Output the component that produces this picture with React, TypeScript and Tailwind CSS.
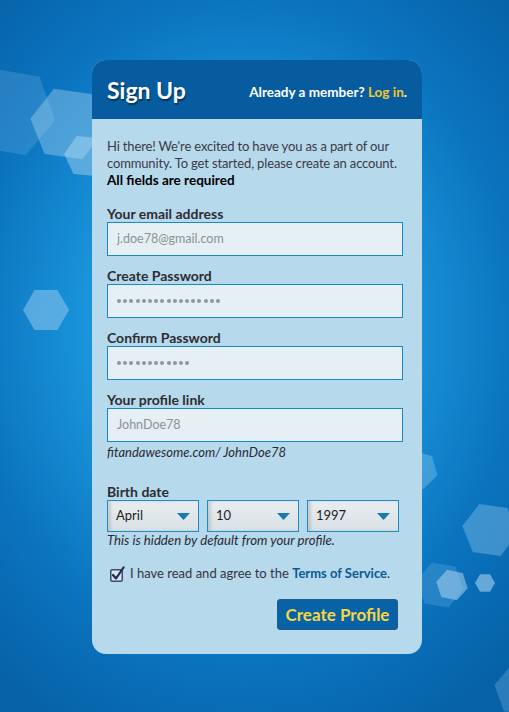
import React from "react";

function Hex({ cx, cy, r, fill, opacity, rot = 0 }: { cx: number; cy: number; r: number; fill: string; opacity: number; rot?: number }) {
  const pts: string[] = [];
  for (let i = 0; i < 6; i++) {
    const a = ((60 * i + rot) * Math.PI) / 180;
    pts.push(`${(cx + r * Math.cos(a)).toFixed(1)},${(cy + r * Math.sin(a)).toFixed(1)}`);
  }
  return <polygon points={pts.join(" ")} fill={fill} opacity={opacity} />;
}

function Background() {
  return (
    <svg className="absolute inset-0" width={509} height={712} viewBox="0 0 509 712">
      <Hex cx={10} cy={112} r={46} fill="#8cc6ec" opacity={0.22} rot={10} />
      <Hex cx={68} cy={124} r={38} fill="#a9d6f3" opacity={0.4} rot={8} />
      <Hex cx={86} cy={156} r={22} fill="#c4e3f7" opacity={0.4} rot={5} />
      <Hex cx={46} cy={310} r={23} fill="#8ec9ef" opacity={0.55} rot={0} />
      <Hex cx={418} cy={470} r={20} fill="#9cd0f0" opacity={0.35} rot={15} />
      <Hex cx={440} cy={585} r={24} fill="#7bbbe6" opacity={0.25} rot={10} />
      <Hex cx={490} cy={530} r={28} fill="#8cc6ec" opacity={0.4} rot={8} />
      <Hex cx={452} cy={585} r={16} fill="#b3daf4" opacity={0.5} rot={12} />
      <Hex cx={485} cy={583} r={10} fill="#a4d2f1" opacity={0.6} rot={0} />
      <Hex cx={522} cy={690} r={28} fill="#7fbde8" opacity={0.3} rot={10} />
    </svg>
  );
}

function Label({ children }: { children: React.ReactNode }) {
  return <div className="text-[14px] font-bold leading-[17px] text-[#2d2d33]">{children}</div>;
}

function Dots({ n }: { n: number }) {
  return (
    <div className="flex gap-[2.2px]">
      {Array.from({ length: n }).map((_, i) => (
        <span key={i} className="w-[4px] h-[4px] rounded-full bg-[#92969a]" />
      ))}
    </div>
  );
}

function Field({ label, value, dots }: { label: string; value?: string; dots?: number }) {
  return (
    <div className="flex flex-col">
      <Label>{label}</Label>
      <div className="h-[34px] border border-[#1589cb] bg-[#e6eff3] flex items-center pl-[9px]">
        {dots ? <Dots n={dots} /> : <span className="text-[12.5px] text-[#8d9196]">{value}</span>}
      </div>
    </div>
  );
}

function Select({ value }: { value: string }) {
  return (
    <div className="w-[92px] h-[32px] border border-[#1b8ccc] bg-[linear-gradient(to_bottom,#e9edef,#d9e1e5)] shadow-[inset_3px_0_3px_rgba(0,0,0,0.12)] flex items-center justify-between pl-[8px] pr-[8px]">
      <span className="text-[13px] text-[#1e1e22]">{value}</span>
      <svg width="13" height="7" viewBox="0 0 13 7">
        <polygon points="0,0 13,0 6.5,7" fill="#1a78b3" />
      </svg>
    </div>
  );
}

export default function App() {
  return (
    <div
      className="relative w-[509px] h-[712px] overflow-hidden bg-[radial-gradient(ellipse_75%_65%_at_48%_46%,#2fb0ec_0%,#1d9be0_35%,#0b75c0_70%,#0661a6_100%)]"
      style={{ fontFamily: "Lato, 'Noto Sans', sans-serif" }}
    >
      <Background />
      <div className="relative flex pl-[92px] pt-[60px]">
        <div className="w-[330px] rounded-[14px] overflow-hidden bg-[#b6d9ec] flex flex-col">
          <div className="h-[59px] bg-[#065c9e] flex items-center justify-between pl-[15px] pr-[15px]">
            <span className="text-[23px] font-bold text-white [text-shadow:1px_2px_1px_rgba(0,20,50,0.55)] leading-none mt-[1px]">Sign Up</span>
            <span className="text-[13.5px] font-bold text-white mt-[6px]">
              Already a member? <span className="text-[#f3c630]">Log in</span>.
            </span>
          </div>
          <div className="flex flex-col pl-[15px] pr-[15px] pt-[19px] pb-[24px]">
            <div className="text-[13px] tracking-[-0.15px] leading-[17px] text-[#3b3947]">
              Hi there! We're excited to have you as a part of our community. To get started, please create an account.
            </div>
            <div className="text-[13.5px] leading-[17px] font-bold text-black">All fields are required</div>
            <div className="flex flex-col gap-[11px] mt-[16px] pr-[4px]">
              <Field label="Your email address" value="j.doe78@gmail.com" />
              <Field label="Create Password" dots={17} />
              <Field label="Confirm Password" dots={12} />
              <Field label="Your profile link" value="JohnDoe78" />
            </div>
            <div className="mt-[2px] text-[13px] leading-[17px] italic text-[#2a2a33]">fitandawesome.com/ JohnDoe78</div>
            <div className="mt-[22px]">
              <Label>Birth date</Label>
              <div className="flex gap-[8px]">
                <Select value="April" />
                <Select value="10" />
                <Select value="1997" />
              </div>
              <div className="text-[13.2px] leading-[17px] italic text-[#2a2a33]">This is hidden by default from your profile.</div>
            </div>
            <div className="mt-[16px] flex items-center pl-[3px] h-[18px]">
              <svg width="15" height="16" viewBox="0 0 15 16" className="mr-[5px]">
                <rect x="0.75" y="3.75" width="11.5" height="11.5" rx="1.5" fill="#d7e3ef" stroke="#3c4a6c" strokeWidth="1.5" />
                <path d="M3 9 L6 12.5 L13.5 1.5" fill="none" stroke="#1f2a48" strokeWidth="2.2" strokeLinecap="round" strokeLinejoin="round" />
              </svg>
              <span className="text-[13px] text-[#34343f]">
                I have read and agree to the <span className="font-bold text-[#0b5a94]">Terms of Service</span>.
              </span>
            </div>
            <div className="mt-[16px] flex justify-end pr-[9px]">
              <div className="h-[31px] w-[121px] rounded-[3px] bg-[#0862a8] border border-[#245a8a] flex items-center justify-center text-[17px] font-bold text-[#f7d640]">
                Create Profile
              </div>
            </div>
          </div>
        </div>
      </div>
    </div>
  );
}
